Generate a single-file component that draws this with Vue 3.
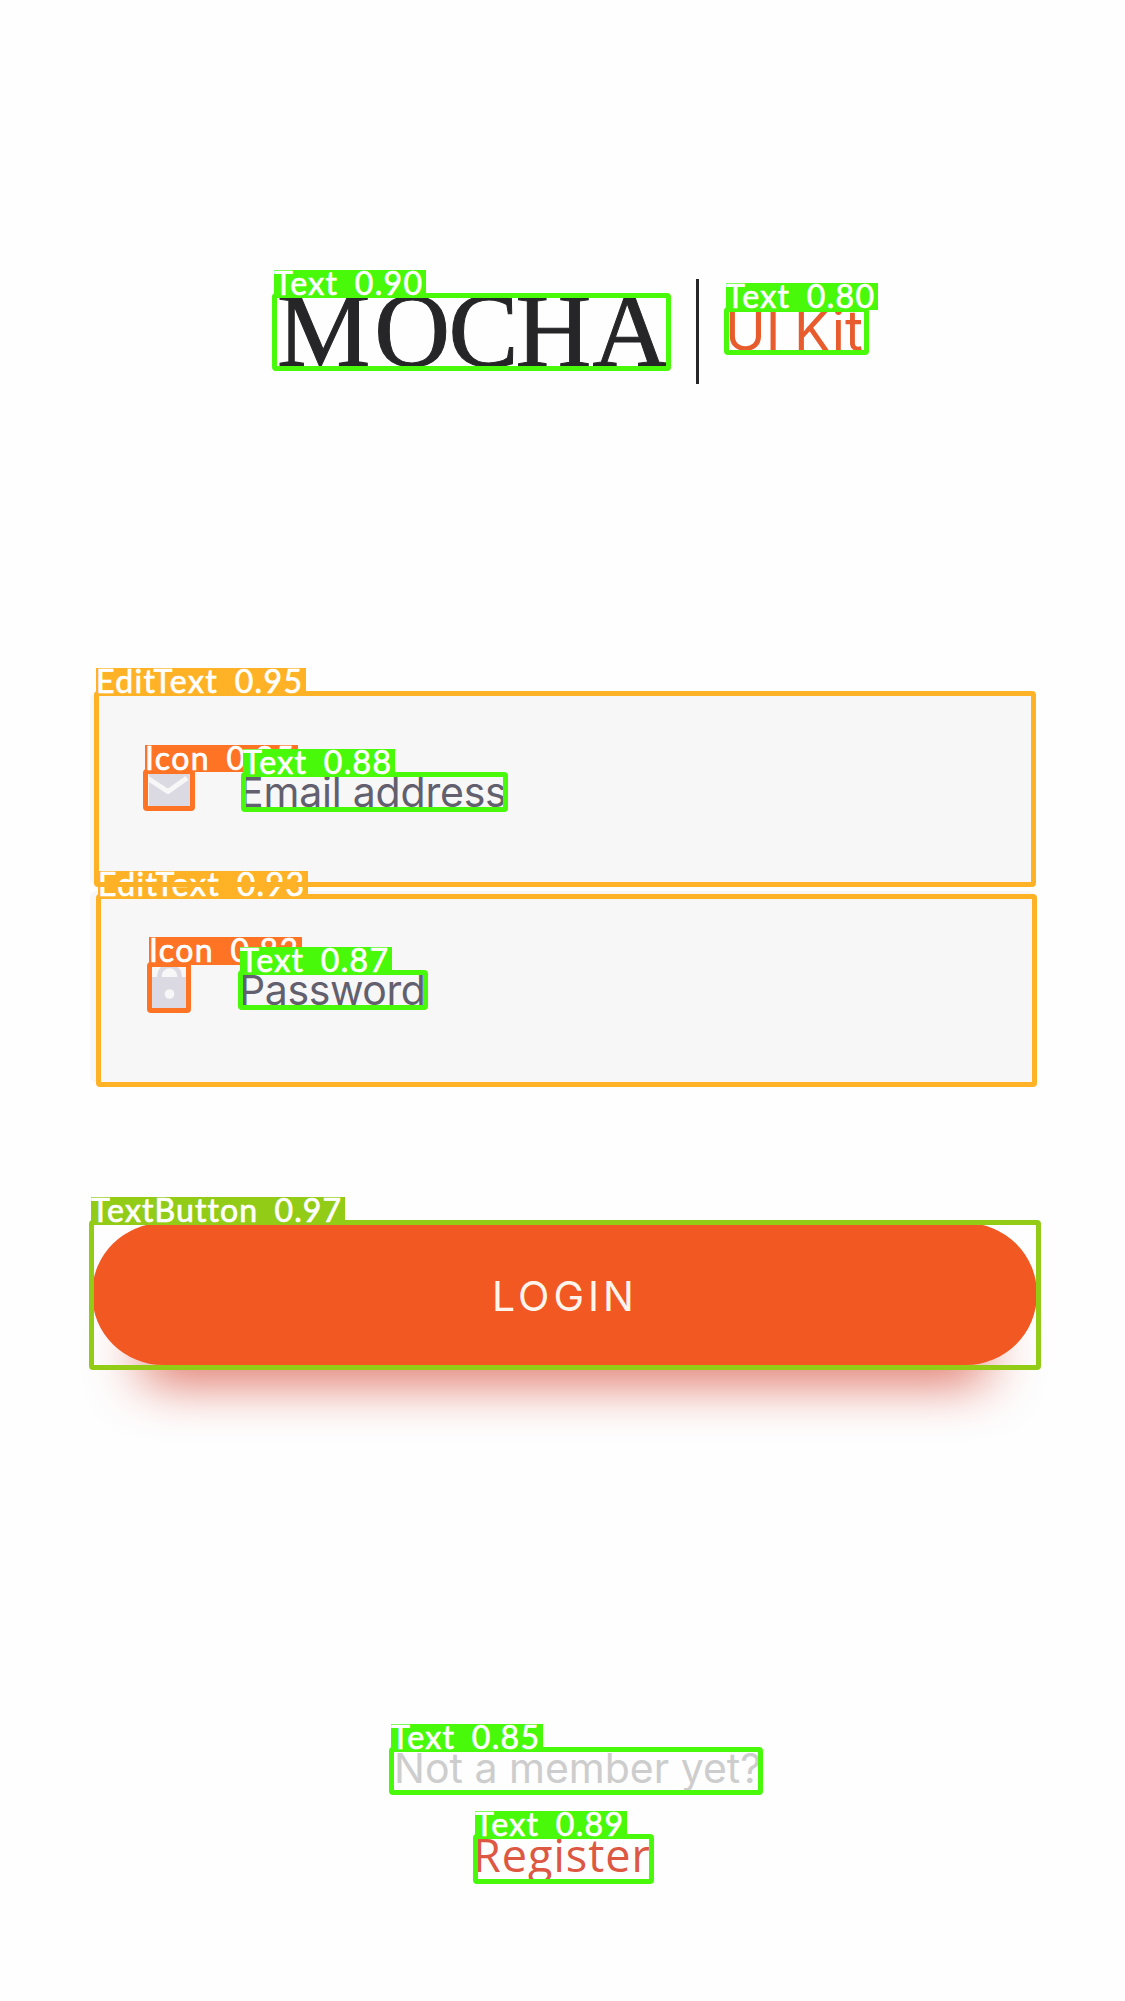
<script setup>
const detections = [
  { name: 'EditText', score: '0.93', kind: 'edit', x: 96, y: 894, w: 941, h: 193, tag: 210, lift: 23 },
  { name: 'EditText', score: '0.95', kind: 'edit', x: 94, y: 691, w: 942, h: 196, tag: 210, lift: 23 },
  { name: 'Icon', score: '0.83', kind: 'icon', x: 147, y: 962, w: 44, h: 51, tag: 153, lift: 25 },
  { name: 'Icon', score: '0.85', kind: 'icon', x: 143, y: 769, w: 52, h: 42, tag: 153, lift: 24 },
  { name: 'Text', score: '0.80', kind: 'text', x: 724, y: 307, w: 145, h: 48, tag: 152, lift: 24 },
  { name: 'Text', score: '0.85', kind: 'text', x: 389, y: 1747, w: 374, h: 48, tag: 152, lift: 23 },
  { name: 'Text', score: '0.87', kind: 'text', x: 238, y: 970, w: 190, h: 40, tag: 152, lift: 23 },
  { name: 'Text', score: '0.88', kind: 'text', x: 241, y: 772, w: 267, h: 40, tag: 152, lift: 23 },
  { name: 'Text', score: '0.89', kind: 'text', x: 473, y: 1834, w: 181, h: 50, tag: 152, lift: 23 },
  { name: 'Text', score: '0.90', kind: 'text', x: 272, y: 293, w: 399, h: 78, tag: 152, lift: 23 },
  { name: 'TextButton', score: '0.97', kind: 'button', x: 89, y: 1220, w: 952, h: 150, tag: 254, lift: 23 },
]
const place = (d) => ({ left: d.x + 'px', top: d.y + 'px', width: d.w + 'px', height: d.h + 'px' })
const tagSize = (d) => ({ width: d.tag + 'px', height: d.lift + 3 + 'px', top: -d.lift - 5 + 'px' })
</script>

<template>
  <main class="screen">
    <header class="brand">
      <svg class="wordmark" width="400" height="105" viewBox="0 0 400 105">
        <text x="4 101.3 175.5 242.5 319.5" y="87">MOCHA</text>
      </svg>
      <span class="divider"></span>
      <svg class="kit" width="150" height="105" viewBox="0 0 150 105">
        <text x="0" y="71.5" textLength="138" lengthAdjust="spacingAndGlyphs">UI Kit</text>
      </svg>
    </header>

    <form class="fields" @submit.prevent>
      <label class="field first">
        <svg class="glyph" width="44" height="40" viewBox="0 0 44 40">
          <path class="ink" d="M2 2h41v34H2z" />
          <path class="flap" d="M1 7.5l20 13L40 7" />
        </svg>
        <span class="hint email">Email address</span>
      </label>
      <label class="field second">
        <svg class="glyph" width="44" height="52" viewBox="0 0 44 52">
          <path class="shackle" d="M12.5 20v-3a10 10 0 0 1 20 0v3" />
          <path class="ink" d="M5 18h35v31H5z" />
          <circle class="hole" cx="22.5" cy="35" r="4.8" />
        </svg>
        <span class="hint pass">Password</span>
      </label>
    </form>

    <button class="login" type="button">LOGIN</button>

    <footer class="join">
      <span class="ask">Not a member yet?</span>
      <a class="register">Register</a>
    </footer>

    <div v-for="d in detections" :key="d.name + d.score + d.kind" class="box" :class="d.kind" :style="place(d)">
      <svg class="tag" :style="tagSize(d)">
        <text x="0" y="24.5" :textLength="d.tag - 4">{{ d.name }} {{ d.score }}</text>
      </svg>
    </div>
  </main>
</template>

<style scoped>
.screen {
  position: relative;
  box-sizing: border-box;
  width: 1125px;
  height: 2001px;
  padding-top: 279px;
  overflow: hidden;
  background: #fefefe;
  font-family: Inter, sans-serif;
}
.brand { display: flex; height: 105px; margin-left: 273px; }
.wordmark text { font: 105px "Liberation Serif", serif; fill: #262628; stroke: #262628; stroke-width: 1; }
.divider { width: 3px; margin-left: 23px; background: #262628; }
.kit { margin-left: 26px; }
.kit text { font: 400 56px Inter, sans-serif; fill: #e85b2c; word-spacing: -2px; }
.fields { display: flex; flex-direction: column; gap: 6px; margin: 308px 0 0 90px; width: 945px; }
.field {
  display: flex;
  box-sizing: border-box;
  align-items: flex-start;
  background: #f7f7f7;
  border-radius: 7px;
}
.first { height: 193px; padding: 79px 0 0 57px; }
.second { height: 192px; padding: 68px 0 0 57px; }
.glyph { flex: none; }
.ink { fill: #dbd9e2; }
.flap { fill: none; stroke: #f7f7f7; stroke-width: 5; }
.shackle { fill: none; stroke: #dbd9e2; stroke-width: 4.6; }
.hole { fill: #f7f7f7; }
.hint { color: #625f6e; font-size: 41px; line-height: 50px; letter-spacing: -0.2px; white-space: nowrap; }
.email { margin: -4px 0 0 48px; }
.pass { margin: 6px 0 0 48px; letter-spacing: -0.4px; }
.login {
  display: block;
  width: 945px;
  height: 142px;
  margin: 140px 0 0 92px;
  padding: 4px 0 0 1px;
  border: 0;
  border-radius: 71px;
  background: #f25822;
  box-shadow: 0 62px 52px -46px rgba(212, 62, 42, 0.8);
  color: #fff5ec;
  font: 400 41px Inter, sans-serif;
  letter-spacing: 4px;
}
.join { display: flex; flex-direction: column; margin-top: 378px; }
.ask { margin-left: 394px; color: #cdcdcd; font-size: 41px; line-height: 50px; white-space: nowrap; }
.register { margin: 32px 0 0 473px; color: #dd5842; font: 500 45px/60px "Open Sans", sans-serif; letter-spacing: 1px; }
.box { position: absolute; box-sizing: border-box; border: 5px solid var(--c); border-radius: 4px; }
.edit { --c: #ffb225; }
.icon { --c: #ff7324; }
.text { --c: #48f90a; }
.button { --c: #92cc17; }
.tag { position: absolute; left: -3px; display: block; background: var(--c); }
.tag text {
  font: 32px Lato, sans-serif;
  font-variant-ligatures: none;
  word-spacing: 7px;
  fill: #fff;
  stroke: #fff;
  stroke-width: 0.7;
}
</style>

<style>
body { margin: 0; background: #fefefe; }
</style>
